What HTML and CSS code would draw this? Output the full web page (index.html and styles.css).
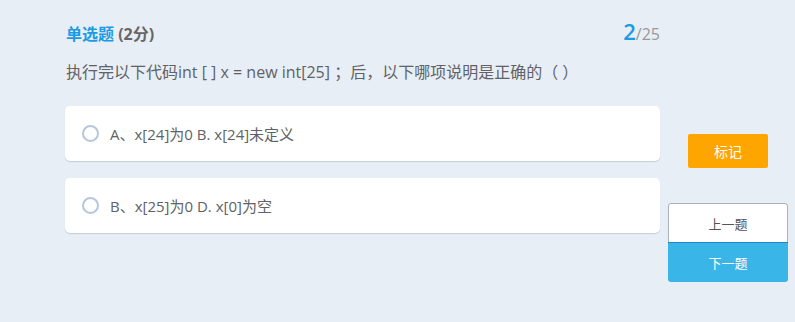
FILE: index.html
```html
<!DOCTYPE html>
<html lang="zh">
<head>
<meta charset="utf-8">
<link rel="stylesheet" href="styles.css">
</head>
<body>
<div class="page">
  <div class="main">
    <div class="head">
      <div class="title"><span class="type">单选题</span> <span class="score">(2分)</span></div>
      <div class="count"><span class="cur">2</span><span class="total">/25</span></div>
    </div>
    <div class="question">执行完以下代码int [ ] x = new int[25] ；后，以下哪项说明是正确的（ ）</div>
    <div class="option"><span class="radio"></span><span class="otext">A、x[24]为0 B. x[24]未定义</span></div>
    <div class="option"><span class="radio"></span><span class="otext">B、x[25]为0 D. x[0]为空</span></div>
  </div>
  <div class="side">
    <button class="mark">标记</button>
    <div class="nav">
      <button class="prev">上一题</button>
      <button class="next">下一题</button>
    </div>
  </div>
</div>
</body>
</html>
```
FILE: styles.css
```css
html, body {
  margin: 0;
  padding: 0;
  background: #e8eef5;
  font-family: "Open Sans", "Noto Sans CJK SC", sans-serif;
  width: 795px;
  height: 322px;
  overflow: hidden;
}
.page {
  display: flex;
  padding-left: 65px;
}
.main {
  width: 595px;
  padding-top: 20px;
}
.head {
  display: flex;
  justify-content: space-between;
  align-items: flex-end;
  height: 28px;
  padding-left: 1px;
}
.title {
  font-size: 16px;
  font-weight: bold;
  line-height: 28px;
}
.type { color: #1a9be6; }
.score { color: #666; }
.count { line-height: 28px; }
.cur {
  color: #1a9be6;
  font-size: 22px;
  font-weight: 600;
}
.total {
  color: #999;
  font-size: 16px;
}
.question {
  font-size: 16px;
  color: #606266;
  line-height: 24px;
  margin-top: 12px;
  padding-left: 1px;
}
.option {
  background: #fff;
  border-radius: 5px;
  box-shadow: 0 1px 1px rgba(150,165,185,0.45);
  height: 55px;
  display: flex;
  align-items: center;
  margin-top: 17px;
  padding-left: 17px;
}
.question + .option { margin-top: 22px; }
.radio {
  width: 13px;
  height: 13px;
  border: 2px solid #b5c7dc;
  border-radius: 50%;
  flex: none;
}
.otext {
  font-size: 15px;
  color: #606266;
  margin-left: 11px;
}
.side {
  margin-left: 8px;
  padding-top: 134px;
  display: flex;
  flex-direction: column;
  align-items: flex-end;
  width: 120px;
}
.mark {
  width: 80px;
  height: 34px;
  margin-right: 20px;
  border: none;
  border-radius: 2px;
  background: #ffa500;
  color: #fff;
  font-family: inherit;
  font-size: 14px;
  padding: 0;
}
.nav {
  margin-top: 35px;
  width: 120px;
  border-radius: 3px;
  overflow: hidden;
  display: flex;
  flex-direction: column;
}
.nav button {
  height: 40px;
  font-family: inherit;
  font-size: 13px;
  padding: 0;
  margin: 0;
}
.prev {
  background: #fff;
  color: #555;
  border: 1px solid #a9b3bf;
  border-bottom: none;
  border-radius: 3px 3px 0 0;
  height: 39px !important;
}
.next {
  background: #39b5e8;
  color: #fff;
  border: none;
  border-top: 1px solid #1688c9;
}
```
